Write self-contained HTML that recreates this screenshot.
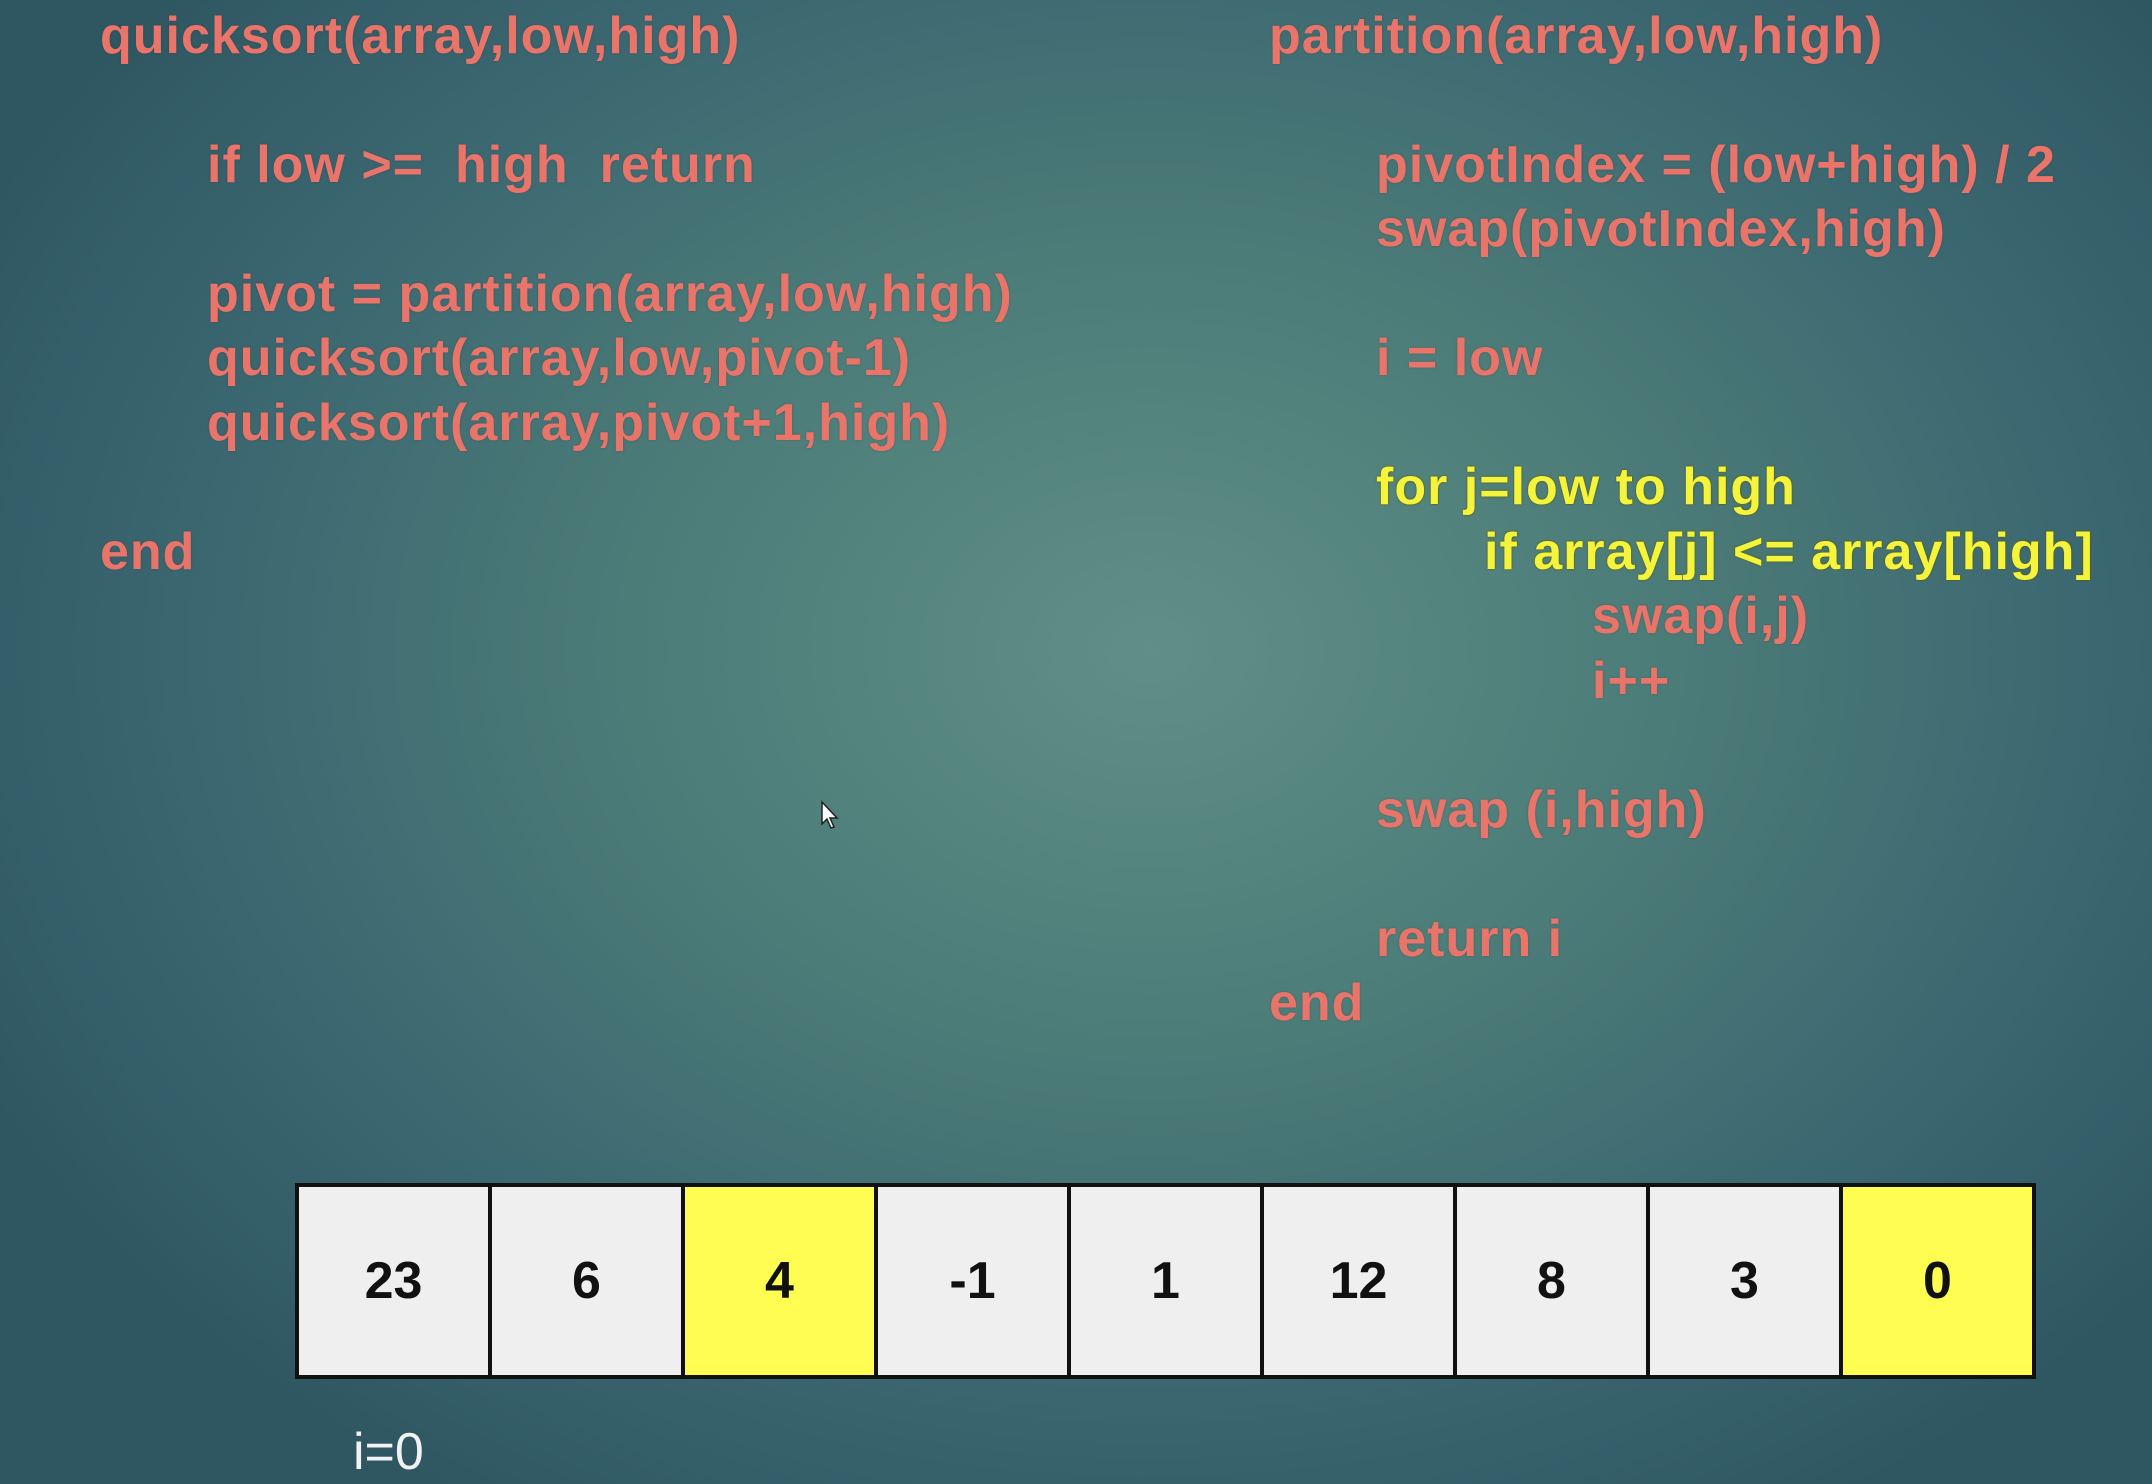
<!DOCTYPE html>
<html><head><meta charset="utf-8"><style>
html,body{margin:0;padding:0}
body{width:2152px;height:1484px;overflow:hidden;position:relative;
background:radial-gradient(ellipse 1300px 1000px at 1150px 650px,#5f8f86 0%,#4c7c78 40%,#3a6670 75%,#2f5762 100%);
font-family:"Liberation Sans",sans-serif}
.t{position:absolute;font-weight:bold;font-size:52px;line-height:64px;letter-spacing:1px;color:#e9756a;white-space:pre;text-shadow:0 0 2px rgba(80,40,40,.35);margin-top:6px}
.y{color:#f4f43c;text-shadow:0 0 2px #5a5a10,0 0 1px #5a5a10}
table{position:absolute;left:295px;top:1183px;border-collapse:collapse}
td{width:189px;height:188px;border:4px solid #111;background:#efefef;text-align:center;vertical-align:middle;font-weight:bold;font-size:52px;color:#111;padding:0}
td.h{background:#fffd52}
</style></head><body>
<div class="t" style="left:100px;top:-2px">quicksort(array,low,high)</div>
<div class="t" style="left:207px;top:127px">if low &gt;=  high  return</div>
<div class="t" style="left:207px;top:256px">pivot = partition(array,low,high)</div>
<div class="t" style="left:207px;top:320px">quicksort(array,low,pivot-1)</div>
<div class="t" style="left:207px;top:385px">quicksort(array,pivot+1,high)</div>
<div class="t" style="left:100px;top:514px">end</div>

<div class="t" style="left:1269px;top:-2px">partition(array,low,high)</div>
<div class="t" style="left:1376px;top:127px">pivotIndex = (low+high) / 2</div>
<div class="t" style="left:1376px;top:191px">swap(pivotIndex,high)</div>
<div class="t" style="left:1376px;top:320px">i = low</div>
<div class="t y" style="left:1376px;top:449px">for j=low to high</div>
<div class="t y" style="left:1484px;top:514px">if array[j] &lt;= array[high]</div>
<div class="t" style="left:1592px;top:578px">swap(i,j)</div>
<div class="t" style="left:1592px;top:643px">i++</div>
<div class="t" style="left:1376px;top:772px">swap (i,high)</div>
<div class="t" style="left:1376px;top:901px">return i</div>
<div class="t" style="left:1269px;top:965px">end</div>

<svg style="position:absolute;left:820px;top:800px" width="22" height="30" viewBox="0 0 22 30"><path d="M2 2 L2 24 L7 19 L11 28 L14 27 L10 18 L17 18 Z" fill="#fff" stroke="#222" stroke-width="1.5"/></svg>

<table><tr>
<td>23</td><td>6</td><td class="h">4</td><td>-1</td><td>1</td><td>12</td><td>8</td><td>3</td><td class="h">0</td>
</tr></table>
<div style="position:absolute;left:353px;top:1422px;font-family:'Liberation Sans Narrow','Liberation Sans',sans-serif;font-size:52px;line-height:60px;color:#f2f2f2">i=0</div>
</body></html>
